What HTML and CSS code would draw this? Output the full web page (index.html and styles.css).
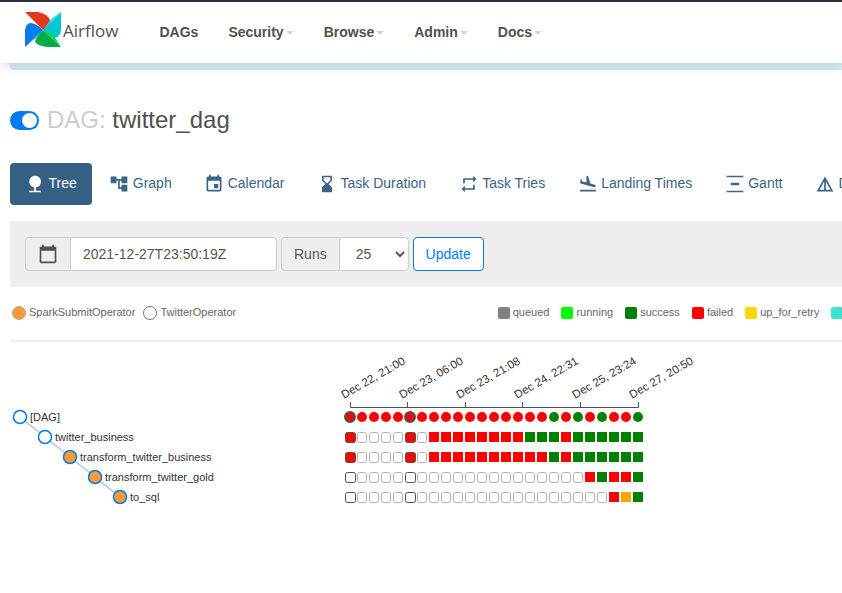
FILE: index.html
```html
<!DOCTYPE html>
<html>
    <head>
        <title>Airflow - twitter_dag</title>
        <link rel="stylesheet" href="styles.css">
    </head>
    <body>
        <nav class="navbar">
            <a class="brand" href="#">
                <svg class="brand-logo" width="38" height="38" viewBox="24 11 38 38">
                    <path fill="#e43921" d="M25 12 L38 12 Q51 15 50 23 Q49 27 43 30 Z"/>
                    <path fill="#00c7d4" d="M61 12 L61 29 Q61 36 55 38 Q50 37 43 30 Z"/>
                    <path fill="#11e1ee" d="M61 12 L43 30 L49 22 Q52 18 61 12 Z"/>
                    <path fill="#00ad46" d="M61 47 L47 47 Q38 46 35 42 Q36 36 43 30 Z"/>
                    <path fill="#04d659" d="M61 47 L43 30 L51 33 Q55 37 61 47 Z"/>
                    <path fill="#017cee" d="M25 47 L25 30 Q26 24 30 23 Q36 23 43 30 Z"/>
                    <path fill="#0cb6ff" d="M25 47 L43 30 L36 38 Q31 41 25 47 Z"/>
                </svg>
                <span>Airflow</span>
            </a>
            <ul class="nav-links">
                <li>DAGs</li>
                <li class="dropdown">Security</li>
                <li class="dropdown">Browse</li>
                <li class="dropdown">Admin</li>
                <li class="dropdown">Docs</li>
            </ul>
        </nav>
        <div class="nav-band"></div>

        <main class="content">
            <div class="dag-title">
                <span class="switch"><span class="knob"></span></span>
                <h2><span class="dag-prefix">DAG:</span> twitter_dag</h2>
            </div>

            <ul class="tabs">
                <li class="tab active">
                    <svg class="icon" viewBox="0 0 24 24"><path d="M13 16.12c3.47-.41 6.17-3.36 6.17-6.95 0-3.87-3.13-7-7-7s-7 3.13-7 7c0 3.47 2.52 6.34 5.83 6.89V20H5v2h14v-2h-6v-3.88z"/></svg>
                    <span>Tree</span>
                </li>
                <li class="tab">
                    <svg class="icon" viewBox="0 0 24 24"><path d="M22 11V3h-7v3H9V3H2v8h7V8h2v10h4v3h7v-8h-7v3h-2V8h2v3z"/></svg>
                    <span>Graph</span>
                </li>
                <li class="tab">
                    <svg class="icon" viewBox="0 0 24 24"><path d="M17 12h-5v5h5v-5zM16 1v2H8V1H6v2H5c-1.11 0-1.99.9-1.99 2L3 19c0 1.1.89 2 2 2h14c1.1 0 2-.9 2-2V5c0-1.1-.9-2-2-2h-1V1h-2zm3 18H5V8h14v11z"/></svg>
                    <span>Calendar</span>
                </li>
                <li class="tab">
                    <svg class="icon" viewBox="0 0 24 24"><path d="M18 22l-.01-6L14 12l3.99-4.01L18 2H6v6l4 4-4 3.99V22h12zM8 7.5V4h8v3.5l-4 4-4-4z"/></svg>
                    <span>Task Duration</span>
                </li>
                <li class="tab">
                    <svg class="icon" viewBox="0 0 24 24"><path d="M7 7h10v3l4-4-4-4v3H5v6h2V7zm10 10H7v-3l-4 4 4 4v-3h12v-6h-2v4z"/></svg>
                    <span>Task Tries</span>
                </li>
                <li class="tab">
                    <svg class="icon" viewBox="0 0 24 24"><path d="M2.5 19h19v2h-19zm7.18-5.73l4.35 1.16 5.31 1.42c.8.21 1.62-.26 1.84-1.06.21-.8-.26-1.62-1.06-1.84l-5.31-1.42-2.76-9.02L10.12 2v8.28L5.15 8.95l-.93-2.32-1.45-.39v5.17l1.6.43 5.31 1.43z"/></svg>
                    <span>Landing Times</span>
                </li>
                <li class="tab">
                    <svg class="icon" viewBox="0 0 24 24"><path d="M2 22v-2h20v2H2zM2 4V2h20v2H2zm5 9.5v-3h10v3H7z"/></svg>
                    <span>Gantt</span>
                </li>
                <li class="tab">
                    <svg class="icon" viewBox="0 0 24 24"><path d="M12 3L2 21h20L12 3zm1 5.92L18.6 19H13V8.92zm-2 0V19H5.4L11 8.92z"/></svg>
                    <span>Details</span>
                </li>
            </ul>

            <form class="filter-panel">
                <div class="input-group">
                    <span class="addon addon-icon">
                        <svg width="20" height="20" viewBox="0 0 24 24"><path d="M20 3h-1V1h-2v2H7V1H5v2H4c-1.1 0-2 .9-2 2v16c0 1.1.9 2 2 2h16c1.1 0 2-.9 2-2V5c0-1.1-.9-2-2-2zm0 18H4V8h16v13z"/></svg>
                    </span>
                    <input class="date-input" type="text" value="2021-12-27T23:50:19Z">
                </div>
                <div class="input-group">
                    <span class="addon">Runs</span>
                    <select class="runs-select">
                        <option>25</option>
                    </select>
                </div>
                <button class="update-btn" type="button">Update</button>
            </form>

            <div class="legend">
                <div class="legend-group">
                    <span class="op-dot op-spark"></span><span>SparkSubmitOperator</span>
                    <span class="op-dot op-twitter"></span><span>TwitterOperator</span>
                </div>
                <div class="legend-group states">
                    <span class="state"><i class="swatch queued"></i>queued</span>
                    <span class="state"><i class="swatch running"></i>running</span>
                    <span class="state"><i class="swatch success"></i>success</span>
                    <span class="state"><i class="swatch failed"></i>failed</span>
                    <span class="state"><i class="swatch retry"></i>up_for_retry</span>
                    <span class="state"><i class="swatch reschedule"></i>up_for_reschedule</span>
                </div>
            </div>

            <hr class="divider">
        </main>

        <svg id="tree" class="tree-chart" width="842" height="170" viewBox="0 345 842 170">
            <path class="axis" d="M350.5 402V407.5H638.5V402M407.5 402V407.5M465.5 402V407.5M522.5 402V407.5M580.5 402V407.5"/>
            <path class="link" d="M20 417C32 427 33 427 45 437M45 437C57 447 58 447 70 457M70 457C82 467 83 467 95 477M95 477C107 487 108 487 120 497"/>
            <g class="node"><circle cx="20" cy="417" r="6.5"/><text x="30" y="421">[DAG]</text></g>
            <g class="node"><circle cx="45" cy="437" r="6.5"/><text x="55" y="441">twitter_business</text></g>
            <g class="node spark"><circle cx="70" cy="457" r="6.5"/><text x="80" y="461">transform_twitter_business</text></g>
            <g class="node spark"><circle cx="95" cy="477" r="6.5"/><text x="105" y="481">transform_twitter_gold</text></g>
            <g class="node spark"><circle cx="120" cy="497" r="6.5"/><text x="130" y="501">to_sql</text></g>
        </svg>

        <script src="tree.js"></script>
    </body>
</html>
```

FILE: styles.css
```css
* {
    box-sizing: border-box;
}
body {
    margin: 0;
    background-color: #fff;
    color: #51504f;
    font-family: "Liberation Sans", Arial, sans-serif;
    font-size: 14px;
    overflow-x: hidden;
}
.navbar {
    position: relative;
    z-index: 2;
    display: flex;
    align-items: center;
    height: 63px;
    border-top: 2px solid #2a2d3a;
    background-color: #fff;
    padding-left: 24px;
    padding-bottom: 1px;
    box-shadow: 0 2px 14px rgba(0, 0, 0, 0.16);
}
.brand {
    display: flex;
    align-items: center;
    width: 135.5px;
    color: #51504f;
    text-decoration: none;
    font-family: "Open Sans", sans-serif;
    font-size: 17px;
}
.brand-logo {
    display: block;
    margin-right: 1px;
    margin-bottom: 4px;
}
.brand span {
    margin-bottom: 4px;
}
.nav-links {
    display: flex;
    margin: 0;
    padding: 0;
    list-style: none;
    font-weight: bold;
    gap: 30px;
}
.dropdown::after {
    content: "";
    display: inline-block;
    margin-left: 2px;
    vertical-align: 2px;
    border-top: 4px solid #d8d0dc;
    border-left: 4px solid transparent;
    border-right: 4px solid transparent;
}
.nav-band {
    height: 7px;
    margin-left: 10px;
    background-color: #d9edf7;
    border-bottom-left-radius: 4px;
}
.content {
    padding-left: 10px;
}
.dag-title {
    display: flex;
    align-items: center;
    height: 93px;
    padding-top: 7px;
}
.dag-title h2 {
    margin: 0;
    font-size: 24px;
    font-weight: normal;
}
.switch {
    display: flex;
    justify-content: flex-end;
    align-items: center;
    width: 29px;
    height: 19px;
    margin-top: 1px;
    margin-right: 8px;
    padding-right: 2px;
    border-radius: 10px;
    background-color: #017cee;
}
.knob {
    width: 15px;
    height: 15px;
    border-radius: 50%;
    background-color: #fff;
}
.dag-prefix {
    color: #ccc;
}
.tabs {
    display: flex;
    gap: 2.5px;
    width: 1000px;
    height: 42px;
    margin: 0;
    padding: 0;
    list-style: none;
}
.tab {
    display: flex;
    align-items: center;
    padding: 0 15px;
    border-radius: 4px;
    color: #3b6489;
    white-space: nowrap;
}
.tab span {
    margin-bottom: 2px;
}
.tab.active {
    background-color: #365f84;
    color: #fff;
}
.icon {
    width: 20px;
    height: 20px;
    margin-right: 3.5px;
    fill: currentColor;
}
.filter-panel {
    display: flex;
    gap: 4px;
    width: 1000px;
    margin-top: 16px;
    padding: 16px 15px;
    background-color: #eee;
}
.input-group {
    display: flex;
    height: 34px;
}
.addon {
    display: flex;
    align-items: center;
    padding: 0 12px;
    border: 1px solid #ccc;
    border-right: none;
    border-radius: 4px 0 0 4px;
    background-color: #eee;
    color: #555;
}
.addon-icon {
    justify-content: center;
    width: 45px;
    padding: 0;
}
.addon-icon svg {
    fill: #51504f;
}
.date-input {
    width: 207px;
    padding: 0 12px;
    border: 1px solid #ccc;
    border-radius: 0 4px 4px 0;
    background-color: #fff;
    color: #555;
    font: 14px "Liberation Sans", Arial, sans-serif;
}
.runs-select {
    width: 70px;
    padding: 0 12px;
    border: 1px solid #ccc;
    border-radius: 0 4px 4px 0;
    background-color: #fff;
    color: #555;
    font: 14px "Liberation Sans", Arial, sans-serif;
}
.update-btn {
    width: 71px;
    height: 34px;
    padding: 0;
    border: 1px solid #017cee;
    border-radius: 4px;
    background-color: #fff;
    color: #017cee;
    font: 14px "Liberation Sans", Arial, sans-serif;
}
.legend {
    display: flex;
    align-items: center;
    height: 50px;
    margin-bottom: 3px;
    width: 1000px;
    color: #666;
    font-size: 11px;
}
.legend-group {
    display: flex;
    align-items: center;
}
.op-dot {
    width: 14px;
    height: 14px;
    border-radius: 50%;
    border: 1px solid #777;
    margin: 2px 3px 0 2px;
}
.op-twitter {
    margin-left: 8px;
    background-color: #fff;
}
.op-spark {
    background-color: #ff9933;
    border-color: #aaa;
}
.states {
    margin-left: 261.5px;
    gap: 12px;
}
.state {
    display: flex;
    align-items: center;
    gap: 3px;
}
.swatch {
    width: 12px;
    height: 12px;
    margin-top: 2px;
    border-radius: 2px;
}
.queued { background-color: gray; }
.running { background-color: lime; }
.success { background-color: green; }
.failed { background-color: red; }
.retry { background-color: gold; }
.reschedule { background-color: turquoise; }
.divider {
    width: 1000px;
    height: 2px;
    margin: 0;
    border: none;
    background-color: #eee;
}
.tree-chart {
    display: block;
    margin-top: 3px;
}
.tree-chart text {
    font-family: "Liberation Sans", Arial, sans-serif;
}
.axis {
    fill: none;
    stroke: #51504f;
    stroke-width: 1;
}
.axis-label {
    font-size: 11.5px;
    fill: #333;
}
.link {
    fill: none;
    stroke: #a3c9e2;
    stroke-width: 1.5;
}
.node circle {
    fill: #fff;
    stroke: #017cee;
    stroke-width: 1.5;
}
.node.spark circle {
    fill: #ff9933;
}
.node text {
    font-size: 11px;
    fill: #333;
}
.task {
    stroke-width: 1;
}
.task.none {
    fill: #fff;
    stroke: #b0b0b0;
}
.task.scheduled {
    stroke: #51504f;
}
.task.ringed {
    stroke: #51504f;
    stroke-width: 2;
}
.task.red { fill: red; }
.task.green { fill: green; }
.task.orange { fill: orange; }
```

FILE: tree.js
```js
var SVG_NS = "http://www.w3.org/2000/svg";
var chart = document.getElementById("tree");

// one letter per run: r failed, g success, o retry, . no status
var rows = [
    "rrrrrrrrrrrrrrrrrgrgrgrrg",
    "r....r.rrrrrrrrgggrgggggg",
    "r....r.rrrrrrrrrrgrgggggg",
    "....................rgrrg",
    "......................rog"
];
var colors = { r: "red", g: "green", o: "orange" };
var tickLabels = [
    ["Dec 22, 21:00", 350],
    ["Dec 23, 06:00", 408],
    ["Dec 23, 21:08", 465],
    ["Dec 24, 22:31", 523],
    ["Dec 25, 23:24", 581],
    ["Dec 27, 20:50", 638]
];

function add(name, attrs, text) {
    var el = document.createElementNS(SVG_NS, name);
    for (var key in attrs) {
        el.setAttribute(key, attrs[key]);
    }
    if (text) {
        el.textContent = text;
    }
    chart.appendChild(el);
}

tickLabels.forEach(function(tick) {
    var x = tick[1] - 6;
    add("text", {
        "class": "axis-label",
        x: x,
        y: 399,
        transform: "rotate(-30 " + x + " 399)"
    }, tick[0]);
});

rows.forEach(function(row, r) {
    var y = 417 + r * 20;
    for (var c = 0; c < row.length; c++) {
        var x = 350 + c * 12;
        var letter = row[c];
        var marked = c == 0 || c == 5;
        if (r == 0) {
            add("circle", {
                "class": "task " + colors[letter] + (marked ? " ringed" : ""),
                cx: x,
                cy: y,
                r: 5
            });
        } else if (marked) {
            add("rect", {
                "class": "task scheduled " + (letter == "." ? "none" : colors[letter]),
                x: x - 4.5,
                y: y - 4.5,
                width: 10,
                height: 10,
                rx: 2
            });
        } else if (letter == ".") {
            add("rect", {
                "class": "task none",
                x: x - 4.5,
                y: y - 4.5,
                width: 9,
                height: 10,
                rx: 2
            });
        } else {
            add("rect", {
                "class": "task " + colors[letter],
                x: x - 5,
                y: y - 5,
                width: 10,
                height: 10
            });
        }
    }
});
```
